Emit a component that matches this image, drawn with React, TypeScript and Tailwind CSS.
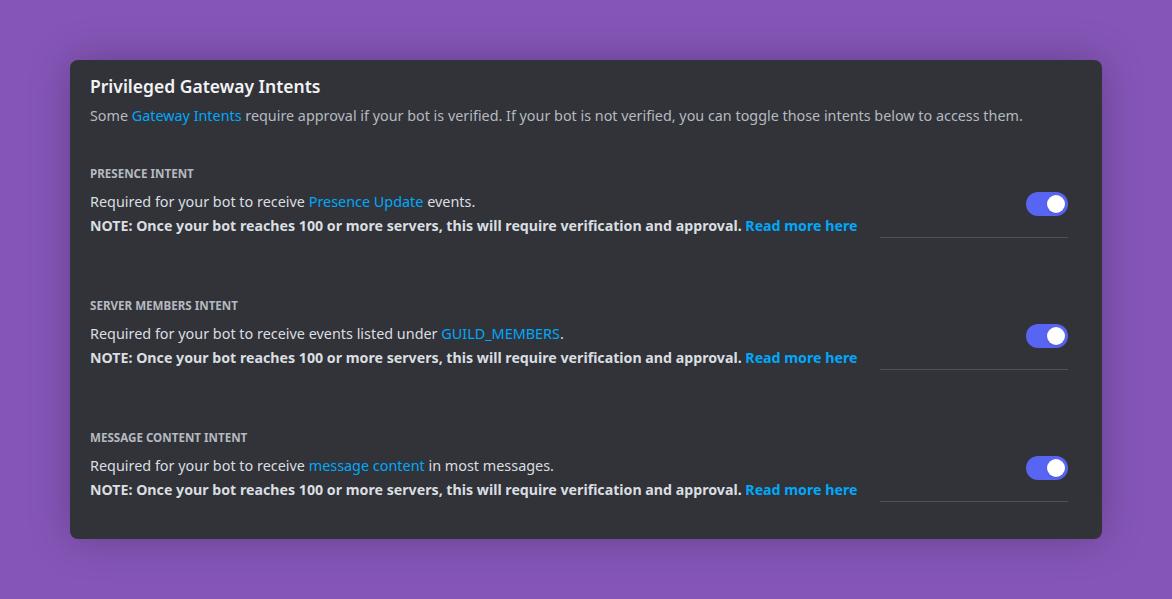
import React from 'react';

type Intent = {
  label: string;
  before: string;
  link: string;
  after: string;
};

const intents: Intent[] = [
  { label: 'PRESENCE INTENT', before: 'Required for your bot to receive ', link: 'Presence Update', after: ' events.' },
  { label: 'SERVER MEMBERS INTENT', before: 'Required for your bot to receive events listed under ', link: 'GUILD_MEMBERS', after: '.' },
  { label: 'MESSAGE CONTENT INTENT', before: 'Required for your bot to receive ', link: 'message content', after: ' in most messages.' },
];

function Toggle() {
  return (
    <div className="w-[42px] h-[24px] rounded-full bg-[#5865f2] flex items-center justify-end px-[3px]">
      <div className="w-[18px] h-[18px] rounded-full bg-white shadow-sm" />
    </div>
  );
}

export default function App() {
  return (
    <div className="min-h-screen w-full bg-[#8556b8] pt-[60px] px-[70px] font-['Noto_Sans',sans-serif]">
      <div className="bg-[#313338] rounded-lg shadow-[0_0_40px_rgba(0,0,0,0.25)] pt-[14px] pb-[37px] pl-[20px] pr-[34px]">
        <h2 className="text-[17.5px] leading-[24px] font-semibold text-[#f2f3f5]">Privileged Gateway Intents</h2>
        <p className="mt-[8px] text-[14.35px] leading-[20px] text-[#b5bac1]">
          Some <span className="text-[#00a8fc]">Gateway Intents</span> require approval if your bot is verified. If your bot is not verified, you can toggle those intents below to access them.
        </p>

        {intents.map((it, i) => (
          <div key={it.label} className={i === 0 ? 'mt-[40px]' : 'mt-[60px]'}>
            <div className="text-[11.6px] leading-[16px] font-bold text-[#b5bac1] uppercase">{it.label}</div>
            <div className="mt-[10px] flex items-stretch">
              <div className="flex-1 pb-[2px]">
                <p className="text-[14.4px] leading-[20px] text-[#dbdee1]">
                  {it.before}<span className="text-[#00a8fc]">{it.link}</span>{it.after}
                </p>
                <p className="mt-[4px] text-[14.2px] leading-[20px] font-bold text-[#dbdee1]">
                  NOTE: Once your bot reaches 100 or more servers, this will require verification and approval.{' '}
                  <span className="text-[#00a8fc]">Read more here</span>
                </p>
              </div>
              <div className="w-[188px] flex justify-end items-start border-b border-[#4e5058]">
                <Toggle />
              </div>
            </div>
          </div>
        ))}
      </div>
    </div>
  );
}
